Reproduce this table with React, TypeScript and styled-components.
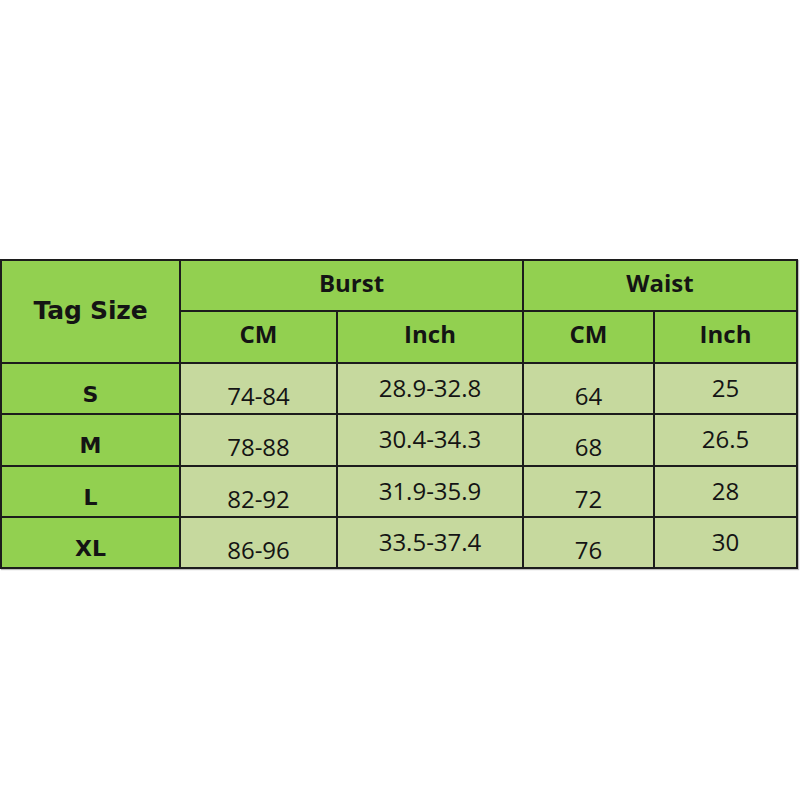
import React from "react";
import styled, { createGlobalStyle } from "styled-components";

const Global = createGlobalStyle`
  html, body { margin: 0; padding: 0; background: #ffffff; }
  body { width: 800px; height: 800px; overflow: hidden; }
`;

const Page = styled.div`
  width: 800px;
  height: 800px;
  padding-top: 259px;
  box-sizing: border-box;
`;

const Grid = styled.div`
  display: grid;
  width: 798px;
  box-sizing: border-box;
  grid-template-columns: 177px 155px 184px 129px 141px;
  grid-template-rows: 49px 50px 49px 50px 49px 49px;
  gap: 2px;
  padding: 2px;
  background: #1c1c1c;
  box-shadow: 1px 1px 1px rgba(0, 0, 0, 0.25);
`;

const Cell = styled.div<{ $head?: boolean; $shift?: number; $lift?: number }>`
  display: flex;
  align-items: center;
  justify-content: center;
  background: ${(p) => (p.$head ? "#92d050" : "#c6d99e")};
  color: #141414;
  font-family: "Open Sans", "Liberation Sans", sans-serif;
  font-size: 24px;
  padding-top: ${(p) => (p.$shift ?? 0) * 2}px;
  padding-bottom: ${(p) => (p.$lift ?? 0) * 2}px;
  box-sizing: border-box;
  line-height: 1;
`;

const HeadCell = styled(Cell)<{ $col?: string; $row?: string }>`
  font-weight: 700;
  grid-column: ${(p) => p.$col ?? "auto"};
  grid-row: ${(p) => p.$row ?? "auto"};
`;

const TagHead = styled(HeadCell)`
  font-family: "DejaVu Sans", Verdana, sans-serif;
  font-size: 25px;
  letter-spacing: -0.2px;
`;

const TagCell = styled(Cell)`
  font-family: "DejaVu Sans", Verdana, sans-serif;
  font-weight: 700;
  font-size: 22px;
`;

const rows = [
  ["S", "74-84", "28.9-32.8", "64", "25"],
  ["M", "78-88", "30.4-34.3", "68", "26.5"],
  ["L", "82-92", "31.9-35.9", "72", "28"],
  ["XL", "86-96", "33.5-37.4", "76", "30"],
];

export default function App() {
  return (
    <Page>
      <Global />
      <Grid>
        <TagHead $head $col="1" $row="1 / span 2" $lift={1}>Tag Size</TagHead>
        <HeadCell $head $col="2 / span 2" $row="1" $lift={3}>Burst</HeadCell>
        <HeadCell $head $col="4 / span 2" $row="1" $lift={3}>Waist</HeadCell>
        <HeadCell $head $lift={3}>CM</HeadCell>
        <HeadCell $head $lift={3}>Inch</HeadCell>
        <HeadCell $head $lift={3}>CM</HeadCell>
        <HeadCell $head $lift={3}>Inch</HeadCell>
        {rows.map((r) => (
          <React.Fragment key={r[0]}>
            <TagCell $head $shift={6}>{r[0]}</TagCell>
            <Cell $shift={7}>{r[1]}</Cell>
            <Cell $lift={1}>{r[2]}</Cell>
            <Cell $shift={7}>{r[3]}</Cell>
            <Cell $lift={1}>{r[4]}</Cell>
          </React.Fragment>
        ))}
      </Grid>
    </Page>
  );
}
